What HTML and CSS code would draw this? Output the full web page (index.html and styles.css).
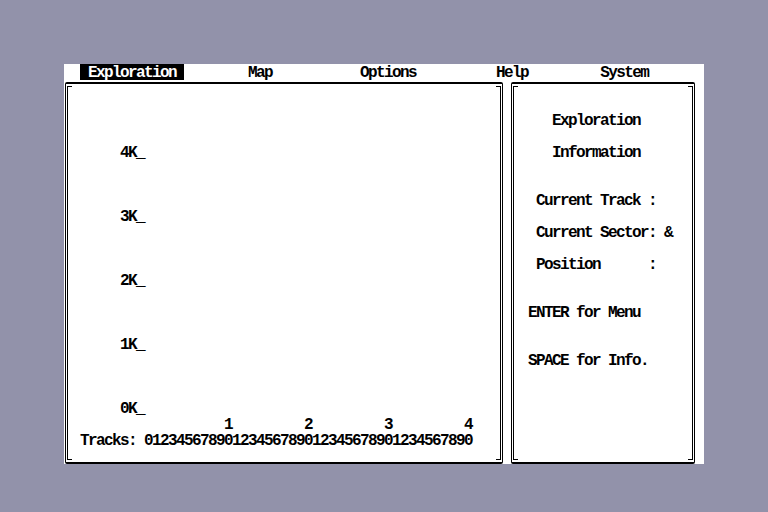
FILE: index.html
```html
<!DOCTYPE html>
<html lang="en">
<head>
    <meta charset="UTF-8">
    <title>Exploration</title>
    <link rel="stylesheet" href="styles.css">
</head>
<body>
    <div class="screen">
        <!-- Menu bar -->
        <pre class="menu">  <span class="menu-active"> Exploration </span>        Map           Options          Help         System</pre>

        <div class="panels">
            <!-- Graph panel -->
            <div class="panel panel-graph">
<pre class="panel-text">



      4K_



      3K_



      2K_



      1K_



      0K_
                   1         2         3         4
 Tracks: 01234567890123456789012345678901234567890</pre>
            </div>

            <!-- Info panel -->
            <div class="panel panel-info">
<pre class="panel-text">

     Exploration

     Information


   Current Track :

   Current Sector: &amp;

   Position      :


  ENTER for Menu


  SPACE for Info.</pre>
            </div>
        </div>
    </div>
</body>
</html>
```

FILE: styles.css
```css
body {
    margin: 0;
    background-color: #9292aa;
}
.screen {
    width: 640px;
    height: 400px;
    margin: 64px auto;
    background-color: #fff;
    color: #000;
    overflow: hidden;
}
.menu,
.panel-text {
    margin: 0;
    font-family: "Liberation Mono", monospace;
    font-size: 16px;
    font-weight: bold;
    letter-spacing: -1.6px;
}
.menu {
    height: 16px;
    line-height: 18px;
}
.menu-active {
    display: inline-block;
    vertical-align: top;
    height: 16px;
    background-color: #000;
    color: #fff;
}
.panels {
    display: flex;
    gap: 8px;
    padding-left: 1px;
    margin-top: 2px;
}
.panel {
    position: relative;
    height: 378px;
    border-top: 2px solid #000;
    border-bottom: 2px solid #000;
    border-left: 1px solid #000;
    border-right: 1px solid #000;
    border-radius: 2px;
}
.panel::before {
    content: "";
    position: absolute;
    top: 2px;
    bottom: 2px;
    left: 1px;
    right: 1px;
    border-left: 1px solid #000;
    border-right: 1px solid #000;
    background:
        linear-gradient(#000, #000) left top / 5px 1px no-repeat,
        linear-gradient(#000, #000) right top / 5px 1px no-repeat,
        linear-gradient(#000, #000) left bottom / 5px 1px no-repeat,
        linear-gradient(#000, #000) right bottom / 5px 1px no-repeat;
    background-origin: border-box;
}
.panel-graph {
    width: 436px;
}
.panel-info {
    width: 182px;
}
.panel-text {
    line-height: 16px;
    padding-top: 13px;
}
.panel-graph .panel-text {
    padding-left: 6px;
}
```
